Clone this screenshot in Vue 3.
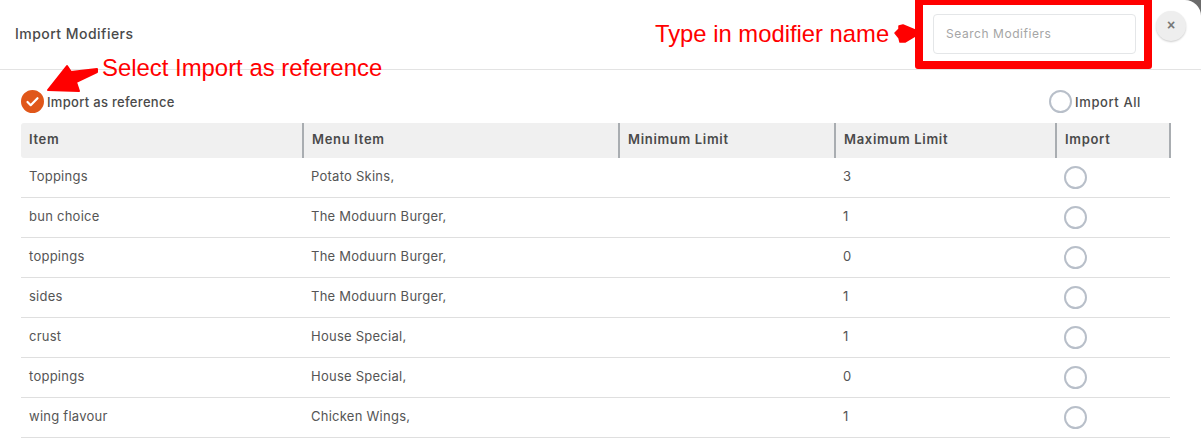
<script setup>
const rows = [
  ['Toppings', 'Potato Skins,', '3'],
  ['bun choice', 'The Moduurn Burger,', '1'],
  ['toppings', 'The Moduurn Burger,', '0'],
  ['sides', 'The Moduurn Burger,', '1'],
  ['crust', 'House Special,', '1'],
  ['toppings', 'House Special,', '0'],
  ['wing flavour', 'Chicken Wings,', '1'],
]
const heads = ['Item', 'Menu Item', 'Minimum Limit', 'Maximum Limit', 'Import']
</script>

<template>
  <div class="page">
    <div class="modal">
      <header class="head">
        <h1 class="title">Import Modifiers</h1>
        <input class="search" placeholder="Search Modifiers" />
        <button class="close">×</button>
      </header>
      <div class="body">
        <div class="tools">
          <label class="opt">
            <span class="radio on">
              <svg width="15" height="15" viewBox="0 0 15 15"><path d="M2.5 8l3.2 3.2 6.8-7" fill="none" stroke="#fff" stroke-width="2.2" stroke-linecap="round" stroke-linejoin="round" /></svg>
            </span>
            Import as reference
          </label>
          <label class="opt all"><span class="radio"></span>Import All</label>
        </div>
        <div class="table">
          <div class="hrow">
            <div v-for="h in heads" :key="h" class="th">{{ h }}</div>
          </div>
          <div v-for="(r, i) in rows" :key="i" class="brow">
            <div class="td">{{ r[0] }}</div>
            <div class="td">{{ r[1] }}</div>
            <div class="td"></div>
            <div class="td">{{ r[2] }}</div>
            <div class="td"><span class="radio"></span></div>
          </div>
        </div>
      </div>
    </div>

    <!-- annotations drawn on top of the screenshot -->
    <div class="redbox"></div>
    <div class="note n1">Type in modifier name</div>
    <div class="note n2">Select Import as reference</div>
    <svg class="arrows" width="1201" height="438" viewBox="0 0 1201 438">
      <path d="M48 90L67 66L71 72L97 69L97 72L76 82L79 91Z" fill="#f00" stroke="#f00" stroke-width="2" stroke-linejoin="round" />
      <path d="M895 33L899 29L899 26L903 25L915 30L915 36L905 42L900 42L899 38Z" fill="#f00" stroke="#f00" stroke-width="1.5" stroke-linejoin="round" />
    </svg>
  </div>
</template>

<style scoped>
.page {
  position: relative;
  width: 1201px;
  height: 438px;
  overflow: hidden;
  background: #6b6b6b;
  font-family: Inter, "Liberation Sans", sans-serif;
  color: #555;
}
.modal {
  height: 438px;
  background: #fff;
  border-top-right-radius: 16px;
}
.head {
  display: flex;
  align-items: flex-start;
  height: 69px;
  border-bottom: 1px solid #e3e3e3;
  padding-left: 15px;
}
.title {
  margin: 25px 0 0;
  flex: 1;
  font-size: 14px;
  line-height: 17px;
  font-weight: 500;
  letter-spacing: 0.47px;
  color: #4a4a4a;
}
.search {
  box-sizing: border-box;
  width: 203px;
  height: 40px;
  margin-top: 14px;
  padding: 0 12px 2px;
  border: 1px solid #e4e6e8;
  border-radius: 4px;
  font: 400 12px Inter, sans-serif;
  letter-spacing: 0.55px;
  outline: none;
}
.search::placeholder { color: #a5a5a5; opacity: 1; }
.close {
  width: 30px;
  height: 30px;
  margin: 11px 15px 0 20px;
  padding: 0 0 2px;
  border: 0;
  border-radius: 50%;
  background: #eee;
  box-shadow: 0 1px 2px rgba(0, 0, 0, 0.2);
  color: #777;
  font: 700 14px "Liberation Sans", sans-serif;
}
.body { padding: 0 30px 0 21px; }
.tools {
  display: flex;
  justify-content: space-between;
  align-items: center;
  box-sizing: border-box;
  height: 53px;
  padding-top: 10px;
}
.opt {
  display: flex;
  align-items: center;
  gap: 3px;
  font-size: 13px;
  font-weight: 500;
  letter-spacing: 0.3px;
  color: #4a4a4a;
}
.all { margin-right: 30px; letter-spacing: 0.6px; }
.radio {
  display: inline-flex;
  align-items: center;
  justify-content: center;
  box-sizing: border-box;
  width: 23px;
  height: 23px;
  border: 2px solid #b8bfc9;
  border-radius: 50%;
  background: #fff;
}
.radio.on { background: #e0571a; border-color: #e0571a; }
.table { width: 1150px; }
.hrow {
  display: grid;
  grid-template-columns: 283px 316px 216px 221px 114px;
  height: 35px;
  background: #f0f0f0;
  border-radius: 3px 0 0 3px;
}
.th {
  box-sizing: border-box;
  padding: 0 8px;
  line-height: 33px;
  font-size: 13px;
  font-weight: 600;
  letter-spacing: 0.68px;
  color: #4a4a4a;
  border-right: 2px solid #a9adb1;
}
.brow {
  display: grid;
  grid-template-columns: 282px 316px 216px 221px 114px;
  box-sizing: border-box;
  height: 40px;
  border-bottom: 1px solid #dfdfdf;
  margin-right: 1px;
}
.td {
  padding: 0 8px;
  line-height: 37px;
  font-size: 13px;
  letter-spacing: 0.25px;
  color: #555;
}
.td .radio { margin-top: 8px; vertical-align: top; }

.redbox {
  position: absolute;
  left: 915px;
  top: -3px;
  box-sizing: border-box;
  width: 237px;
  height: 72px;
  border: 8px solid #f00;
  border-radius: 3px;
}
.note {
  position: absolute;
  font-family: "Liberation Sans", sans-serif;
  font-size: 23.9px;
  line-height: 28px;
  color: #f00;
  white-space: nowrap;
}
.n1 { left: 655px; top: 20px; font-size: 23.8px; }
.n2 { left: 102px; top: 54px; }
.arrows { position: absolute; left: 0; top: 0; }
</style>
